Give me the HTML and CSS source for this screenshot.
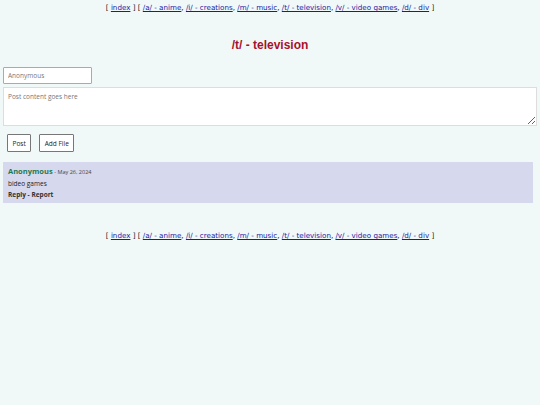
FILE: index.html
```html
<!DOCTYPE html>
<html>
<head>
<meta charset="utf-8">
<link rel="stylesheet" href="styles.css">
</head>
<body>
<nav class="nav">[ <a href="#">index</a> ] [ <a href="#">/a/ - anime</a>, <a href="#">/i/ - creations</a>, <a href="#">/m/ - music</a>, <a href="#">/t/ - television</a>, <a href="#">/v/ - video games</a>, <a href="#">/d/ - div</a> ]</nav>
<h1 class="title">/t/ - television</h1>
<form class="form">
  <input class="name" type="text" placeholder="Anonymous">
  <textarea class="content" placeholder="Post content goes here"></textarea>
  <div class="buttons">
    <button class="btn" type="button">Post</button>
    <button class="btn" type="button">Add File</button>
  </div>
</form>
<div class="post">
  <div class="meta"><span class="author">Anonymous</span> <span class="date">- May 26, 2024</span></div>
  <div class="body">bideo games</div>
  <div class="actions">Reply - Report</div>
</div>
<nav class="nav footer">[ <a href="#">index</a> ] [ <a href="#">/a/ - anime</a>, <a href="#">/i/ - creations</a>, <a href="#">/m/ - music</a>, <a href="#">/t/ - television</a>, <a href="#">/v/ - video games</a>, <a href="#">/d/ - div</a> ]</nav>
</body>
</html>
```
FILE: styles.css
```css
html, body { margin: 0; padding: 0; }
body {
  background: #f0f9f8;
  font-family: "Open Sans", "Noto Sans", sans-serif;
  color: #222;
  padding: 0 3px;
}
.nav {
  font-family: "DejaVu Sans", Verdana, sans-serif;
  font-size: 7.15px;
  text-align: center;
  color: #222;
  padding-top: 3px;
  line-height: 10px;
}
.nav a { color: #1a1aa6; }
.title {
  font-family: "Liberation Sans", Arial, sans-serif;
  font-size: 12px;
  font-weight: bold;
  color: #a8112a;
  text-align: center;
  margin: 25px 0 0;
  line-height: 14px;
}
.form {
  margin-top: 15px;
  display: flex;
  flex-direction: column;
}
.name {
  width: 89px;
  height: 17px;
  box-sizing: border-box;
  border: 1px solid #aaa;
  border-radius: 1px;
  font-family: inherit;
  font-size: 6.5px;
  padding: 0 4px;
  background: #fff;
}
.name::placeholder, .content::placeholder { color: #777; }
.content {
  margin-top: 3px;
  width: 534px;
  height: 39px;
  box-sizing: border-box;
  border: 1px solid #ddd;
  font-family: inherit;
  font-size: 6.5px;
  padding: 4px 4px;
  background: #fff;
}
.buttons {
  display: flex;
  gap: 8px;
  margin-top: 8px;
  padding-left: 4px;
}
.btn {
  height: 18px;
  box-sizing: border-box;
  border: 1px solid #777;
  background: #fff;
  font-family: inherit;
  font-size: 6.5px;
  padding: 0 4.5px;
  color: #222;
  border-radius: 1px;
}
.post {
  margin-top: 10px;
  width: 530px;
  box-sizing: border-box;
  background: #d6d8ee;
  padding: 4px 5px 3px;
  font-size: 6.5px;
  line-height: 11px;
  color: #222;
}
.author { color: #1f7a4e; font-weight: bold; font-size: 7.5px; }
.date { color: #444; font-size: 5.5px; }
.actions { font-weight: bold; color: #333; }
.footer { margin-top: 25px; }
```
